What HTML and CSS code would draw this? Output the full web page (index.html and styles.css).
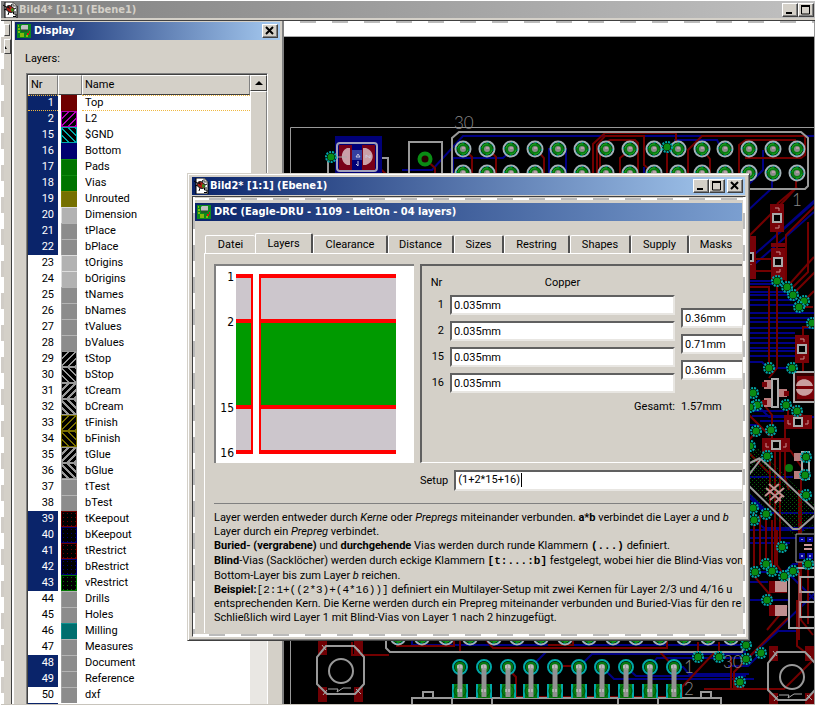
FILE: index.html
```html
<!DOCTYPE html>
<html lang="de">
<head>
<meta charset="utf-8">
<title>Bild4* [1:1] (Ebene1)</title>
<link rel="stylesheet" href="styles.css">
</head>
<body>
<svg class="defs" aria-hidden="true">
  <defs>
    <symbol id="doc-icon" viewBox="0 0 16 16">
      <path d="M2 0h8l4 4v12H2z" fill="#fff" stroke="#000" stroke-width="1"/>
      <path d="M10 0v4h4" fill="#d4d0c8" stroke="#555"/>
      <path d="M0 3l3 2M1 8l3-1M5 13l1-3M9 2L8 4M13 6l-2 1" stroke="#000"/>
      <ellipse cx="7" cy="7" rx="4" ry="3" transform="rotate(35 7 7)" fill="#b41a12" stroke="#222"/>
      <path d="M3 5l3-1 1 3z" fill="#111"/><path d="M8 6l3 1-1 3-2-1z" fill="#3a8a1d"/>
      <path d="M13 10h-2.500v2H13v2.500h-3" fill="none" stroke="#000"/>
    </symbol>
    <symbol id="board-icon" viewBox="0 0 14 14">
      <path d="M0 0h14v14H0z" fill="#0b8a1c"/>
      <path d="M5 1h6v5H4V2z" fill="#c0c0c0"/><path d="M4 6h7M5 7v1M7 7v1M9 7v1" stroke="#333"/>
      <path d="M1 2h1M1 5h2M1 8h2M3 10h4M3 12h4M9 12h2" stroke="#ffe600"/>
      <path d="M10 9h2v2h-2zM12 7h1v2h-1z" fill="#e01010"/>
    </symbol>
    <symbol id="min-icon" viewBox="0 0 12 10"><path d="M2 8h6" stroke="#000" stroke-width="2"/></symbol>
    <symbol id="max-icon" viewBox="0 0 12 10"><path d="M1.500 1v8h8V1M1 1.500h9" fill="none" stroke="#000"/><path d="M1 1h9" stroke="#000" stroke-width="2"/></symbol>
    <symbol id="close-icon" viewBox="0 0 12 10"><path d="M2 1l7 7M9 1L2 8" stroke="#000" stroke-width="2"/></symbol>
    <g id="pad">
      <circle r="7.500" fill="#000" stroke="#a3b1b7" stroke-width="2"/>
      <circle r="6.500" fill="none" stroke="#00a0a0" stroke-dasharray="2 3"/>
      <circle r="4.500" fill="#8c8c8c" stroke="#087a10" stroke-width="3"/>
      <path d="M-5-1a5 5 0 0 1 6-4M5 1a5 5 0 0 1-6 4" fill="none" stroke="#1ca824"/>
      <path d="M-1-2h3v2h-3z" fill="#b9a0a8"/>
    </g>
    <g id="via">
      <circle r="5" fill="#000" stroke="#00a8a8" stroke-width="2" stroke-dasharray="2 1"/>
      <circle r="3.500" fill="#0a8c14"/>
    </g>
    <g id="pinpair">
      <circle r="7" fill="#000" stroke="#00a8a8" stroke-width="2"/><circle r="5.500" fill="#087a10"/>
      <path d="M-6 17h12v14h-12z" fill="#087a10"/><path d="M-7 17v14M7 17v14" stroke="#00a8a8" stroke-width="2"/>
      <circle cy="24" r="6" fill="#087a10" stroke="#054f0a"/>
      <path d="M-2.500 0h5v30h-5z" fill="#929292"/><circle r="3" fill="#a0a0a0"/>
      <path d="M-2-2v3M1-2v3M-2 22v3M1 22v3" stroke="#d8d8d8"/>
    </g>
    <g id="chip">
      <path d="M-7-14H7V14H-7z" fill="#780208"/><path d="M-4-4h8v8h-8z" fill="#000" stroke="#a9a9a9" stroke-width="2"/>
      <path d="M-2-10h4v3M-2 10h4v-3" fill="none" stroke="#c98c8c"/>
    </g>
    <g id="switch">
      <path d="M-23-31h9v15h-9zM13-31h9v15h-9zM-23 16h9v15h-9zM13 16h9v15h-9z" fill="#700004"/>
      <path d="M-15-25h28l10 11v27l-9 10h-28l-10-10v-27z" fill="none" stroke="#999" stroke-width="2"/>
      <circle r="12" fill="none" stroke="#999" stroke-width="2"/>
      <path d="M-13 18h10l-1 3 6-4h8M-19-26l4 5M-18 24l4-5M14-24l5 4M15 18l5 5" fill="none" stroke="#aaa" stroke-width="1"/>
    </g>
    <pattern id="dots" width="4" height="4" patternUnits="userSpaceOnUse"><path d="M0 0h1v1H0zM2 2h1v1H2z" fill="#075a0a"/></pattern>
  </defs>
</svg>

<main class="app">
  <header class="titlebar titlebar-idle">
    <svg class="icon16"><use href="#doc-icon"/></svg>
    <h1 class="title">Bild4* [1:1] (Ebene1)</h1>
    <button class="cap" aria-label="Minimieren"><svg><use href="#min-icon"/></svg></button><button class="cap" aria-label="Maximieren"><svg><use href="#max-icon"/></svg></button>
  </header>

  <div class="workspace">
    <div class="strip"><span class="strip-box"></span><span class="strip-arrow"><i></i></span></div>

    <section class="display">
      <header class="titlebar titlebar-active">
        <svg class="icon14"><use href="#board-icon"/></svg>
        <h2 class="title">Display</h2>
        <button class="cap" aria-label="Schließen"><svg><use href="#close-icon"/></svg></button>
      </header>
      <p class="layers-label">Layers:</p>
      <div class="list">
        <table class="layers">
          <thead><tr><th class="nr">Nr</th><th class="sw" aria-label="Farbe"></th><th>Name</th></tr></thead>
          <tbody>
            <tr class="on focus"><td>1</td><td><i class="s red"></i></td><td>Top</td></tr>
            <tr class="on"><td>2</td><td><i class="s hatch-up magenta"></i></td><td>L2</td></tr>
            <tr class="on"><td>15</td><td><i class="s hatch-down cyan"></i></td><td>$GND</td></tr>
            <tr class="on"><td>16</td><td><i class="s blue"></i></td><td>Bottom</td></tr>
            <tr class="on"><td>17</td><td><i class="s green"></i></td><td>Pads</td></tr>
            <tr class="on"><td>18</td><td><i class="s green"></i></td><td>Vias</td></tr>
            <tr class="on"><td>19</td><td><i class="s olive"></i></td><td>Unrouted</td></tr>
            <tr class="on"><td>20</td><td><i class="s light"></i></td><td>Dimension</td></tr>
            <tr class="on"><td>21</td><td><i class="s"></i></td><td>tPlace</td></tr>
            <tr class="on"><td>22</td><td><i class="s"></i></td><td>bPlace</td></tr>
            <tr><td>23</td><td><i class="s light"></i></td><td>tOrigins</td></tr>
            <tr><td>24</td><td><i class="s light"></i></td><td>bOrigins</td></tr>
            <tr><td>25</td><td><i class="s"></i></td><td>tNames</td></tr>
            <tr><td>26</td><td><i class="s"></i></td><td>bNames</td></tr>
            <tr><td>27</td><td><i class="s"></i></td><td>tValues</td></tr>
            <tr><td>28</td><td><i class="s"></i></td><td>bValues</td></tr>
            <tr><td>29</td><td><i class="s hatch-up"></i></td><td>tStop</td></tr>
            <tr><td>30</td><td><i class="s hatch-down"></i></td><td>bStop</td></tr>
            <tr><td>31</td><td><i class="s hatch-up wide"></i></td><td>tCream</td></tr>
            <tr><td>32</td><td><i class="s hatch-down wide"></i></td><td>bCream</td></tr>
            <tr><td>33</td><td><i class="s hatch-up gold"></i></td><td>tFinish</td></tr>
            <tr><td>34</td><td><i class="s hatch-down gold"></i></td><td>bFinish</td></tr>
            <tr><td>35</td><td><i class="s hatch-up wide"></i></td><td>tGlue</td></tr>
            <tr><td>36</td><td><i class="s hatch-down wide"></i></td><td>bGlue</td></tr>
            <tr><td>37</td><td><i class="s"></i></td><td>tTest</td></tr>
            <tr><td>38</td><td><i class="s"></i></td><td>bTest</td></tr>
            <tr class="on"><td>39</td><td><i class="s dots dred"></i></td><td>tKeepout</td></tr>
            <tr class="on"><td>40</td><td><i class="s dots dblue"></i></td><td>bKeepout</td></tr>
            <tr class="on"><td>41</td><td><i class="s dots dred"></i></td><td>tRestrict</td></tr>
            <tr class="on"><td>42</td><td><i class="s dots dblue"></i></td><td>bRestrict</td></tr>
            <tr class="on"><td>43</td><td><i class="s dots dgreen"></i></td><td>vRestrict</td></tr>
            <tr><td>44</td><td><i class="s"></i></td><td>Drills</td></tr>
            <tr><td>45</td><td><i class="s"></i></td><td>Holes</td></tr>
            <tr><td>46</td><td><i class="s teal"></i></td><td>Milling</td></tr>
            <tr><td>47</td><td><i class="s"></i></td><td>Measures</td></tr>
            <tr class="on"><td>48</td><td><i class="s"></i></td><td>Document</td></tr>
            <tr class="on"><td>49</td><td><i class="s"></i></td><td>Reference</td></tr>
            <tr><td>50</td><td><i class="s"></i></td><td>dxf</td></tr>
            <tr class="on"><td></td><td></td><td></td></tr>
          </tbody>
        </table>
        <div class="scroll"><button class="up" aria-label="Nach oben"><i></i></button><div class="thumb"></div></div>
      </div>
    </section>

    <section class="board">
      <div class="toolbar"></div>
      <svg class="pcb" viewBox="284 37 530 667" preserveAspectRatio="xMinYMin slice" role="img" aria-label="Platine">
        <g fill="none" stroke="#000084" stroke-width="2">
          <path d="M402 170h30l31-34h354M453 173v-15h50l9-8M549 173v-24h18M566 149v24M674 140h43l4 8M644 173v-6M763 150v20l-20 20M772 180v8l-30 28"/>
          <path d="M748 260L817 200M748 270l66-58M760 250l55-50M748 281h24M748 284h30l9 5M748 292h40M748 295h44M748 300h48M748 305h50M748 313h67M748 318h67M748 322h67M748 328h67M748 333h47M748 338h47M748 343h47M748 348h47M748 351h47M748 356h47M748 362h14l6 6M770 368h22M748 411h36M752 416h32M760 421h40M757 405l12 12h46M748 425h10"/>
          <path d="M748 477h45M748 493l20 20h47M750 498l15 15M748 520h6l10 8h50M748 538h50M748 543h42M748 530h56M760 535v20M755 572h30l8-8h20M748 582h20M767 600h-19M767 600h22M815 600l-28-28M746 660l60-58 9-9M761 653l-13 13v0h-20M746 660l32-29h20"/>
          <path d="M412 640v5h330M440 645h25M531 667l15-15h200M579 667l13-13h150M650 667l7-9h85M602 667l12 12h140M674 667h9l6 7h60M626 667l10 9h110"/>
        </g>
        <g fill="none" stroke="#730000" stroke-width="2">
          <path d="M376 165l10 9M425 159l10 9v6M466 151l6 6v16M490 151l6 6v16M538 151l6 7v15M593 173v-29l12-11h71v10M597 173v-28l8-9h39v29l6 5M600 173v-27l10-6h25l3 3v30M630 150l-10 8v15M667 150v23M688 173v-23l14-14h103v19l-4 3h-56M702 149l8 10v14M739 173v-28l7-5h50M796 173v15l-10 11-38 38"/>
          <path d="M777 204l20-17M777 232v20M777 278v90l-8 10M748 259h37M748 271h24M748 287h21v80M787 287l27-30M786 285v-50l29-29M808 222v50l-15 15M793 294l22-22M804 301l10-10M799 307h14M803 335v-8h10M803 363v10M778 378v30M762 402l10 13v27M788 410v5M785 428v25M748 414l22 22M757 431l-9 10M793 406l15 15"/>
          <path d="M748 452l22 22M770 455v50M775 450v120M780 450v97M790 450l17 25M785 453v25l4 12M766 514v50M754 510v66l17 20M760 515v50M772 520v50M777 530v35l7 10M801 470v150l12 15M799 490v150M797 600v46l8 6M767 630l20-24M788 618l-54 54v15h10M704 689h80l30-30M808 564v60"/>
          <path d="M352 642v13h37M397 640v6h57v-6M460 640v12h214M486 640l7 8h174v-8M548 645h25v-5M698 657v-15M719 657v-15M731 657v32h14M715 652l-33 35v10H516v-20l-8-8M555 666h24M674 667l-14-15M674 667v30"/>
        </g>
        <g fill="none" stroke="#999" stroke-width="1">
          <path d="M290.500 705V127.500H817"/>
          <path d="M328 173v-15M388 173v-15h-10" stroke-width="2"/>
          <rect x="409" y="142" width="33" height="40" stroke-width="2"/>
          <path d="M459 132h342l7 6v48l-3 3H455l-3-3v-48z" stroke-width="2"/>
          <path d="M386 640v8l4 4h352l2-6v-6" stroke-width="2"/>
          <path d="M412 705v-7h309v7M452 698v7M492 698v7M618 698v7M658 698v7M423 698v-6h10v6M701 698v-6h10v6" stroke-width="2"/>
        </g>
        <path d="M335 136h47v38h-47z" fill="#000078"/>
        <rect x="337" y="143" width="40" height="28" rx="3" fill="none" stroke="#a0a0b8" stroke-width="2"/>
        <path d="M339 145h13v25h-13zM362 145h13v25h-13z" fill="#780018"/>
        <path d="M350 148v17h-3c-7-3-7-14 0-17zM363 148v17h3c9-3 9-14 0-17z" fill="#caa0a8"/><path d="M352 150h10v10h-10z" fill="#343fa0"/>
        <path d="M356 157l2-3 2 3zM358 161v5l-2-2M366 158v-3l4 3v-3" fill="none" stroke="#c8c8e0"/>
        <path d="M331 157h16" stroke="#a9a9a9"/><use href="#via" x="331" y="157"/>
        <circle cx="425" cy="159" r="5.500" fill="#260000" stroke="#0a8c14" stroke-width="4"/>
        <g>
          <use href="#pad" x="463" y="149"/><use href="#pad" x="487" y="149"/><use href="#pad" x="511" y="149"/><use href="#pad" x="535" y="149"/><use href="#pad" x="558" y="149"/><use href="#pad" x="582" y="149"/><use href="#pad" x="606" y="149"/><use href="#pad" x="630" y="149"/><use href="#pad" x="654" y="149"/><use href="#pad" x="678" y="149"/><use href="#pad" x="702" y="149"/><use href="#pad" x="725" y="149"/><use href="#pad" x="749" y="149"/><use href="#pad" x="773" y="149"/><use href="#pad" x="797" y="149"/>
          <use href="#pad" x="463" y="173"/><use href="#pad" x="487" y="173"/><use href="#pad" x="511" y="173"/><use href="#pad" x="535" y="173"/><use href="#pad" x="558" y="173"/><use href="#pad" x="582" y="173"/><use href="#pad" x="606" y="173"/><use href="#pad" x="630" y="173"/><use href="#pad" x="654" y="173"/><use href="#pad" x="678" y="173"/><use href="#pad" x="702" y="173"/><use href="#pad" x="725" y="173"/><use href="#pad" x="749" y="173"/><use href="#pad" x="773" y="173"/><use href="#pad" x="797" y="173"/>
          <use href="#pad" x="398" y="637"/><use href="#pad" x="422" y="637"/><use href="#pad" x="446" y="637"/><use href="#pad" x="470" y="637"/><use href="#pad" x="494" y="637"/><use href="#pad" x="517" y="637"/><use href="#pad" x="541" y="637"/><use href="#pad" x="565" y="637"/><use href="#pad" x="589" y="637"/><use href="#pad" x="613" y="637"/><use href="#pad" x="636" y="637"/><use href="#pad" x="660" y="637"/><use href="#pad" x="684" y="637"/><use href="#pad" x="708" y="637"/><use href="#pad" x="731" y="637"/>
        </g>
        <use href="#via" x="667" y="147"/>
        <use href="#pinpair" x="460" y="667"/><use href="#pinpair" x="484" y="667"/><use href="#pinpair" x="508" y="667"/><use href="#pinpair" x="531" y="667"/><use href="#pinpair" x="555" y="667"/><use href="#pinpair" x="579" y="667"/><use href="#pinpair" x="602" y="667"/><use href="#pinpair" x="626" y="667"/><use href="#pinpair" x="650" y="667"/><use href="#pinpair" x="674" y="667"/>
        <use href="#chip" x="777" y="218"/><use href="#chip" x="778" y="262"/><use href="#chip" x="749" y="257"/><use href="#chip" x="802" y="349"/>
        <path d="M771 245h14M771 278h14" stroke="#780208" stroke-width="4"/>
        <path d="M742 236h14v14h-14zM742 265h14v14h-14z" fill="#780208"/>
        <use href="#chip" transform="translate(798 422) rotate(90)"/><use href="#chip" transform="translate(776 445) rotate(90)"/>
        <path d="M764 380h8v9h-8zM764 398h8v9h-8zM779 389h8v8h-8z" fill="#b87c7c"/><path d="M762 382h5v5h-5zM762 400h5v5h-5zM784 391h5v5h-5z" fill="#780208"/><path d="M772 379h6v28h-6z" fill="#000" stroke="#aaa" stroke-width="2"/>
        <path d="M794 372h24v30h-24z" fill="#300" stroke="#aaa" stroke-width="2"/><path d="M797 376h17v23h-17z" fill="#780208"/><path d="M796 386c1-9 15-9 17 0zM796 389c1 9 15 9 17 0z" fill="#c9a0a0"/>
        <path d="M794 453h7v8h-7zM794 471h7v8h-7z" fill="#b87c7c"/><path d="M802 452h7v27h-7z" fill="none" stroke="#aaa" stroke-width="2"/>
        <path d="M748 456l10-6 60 62-18 18h-7l-45-46z" fill="url(#dots)"/>
        <path d="M748 476l13-17 54 51M748 485l45 44h6l16-14M750 463l10-5" fill="none" stroke="#999" stroke-width="2"/>
        <path d="M748 456l10-7 60 60M748 492l48 44 20-13" fill="none" stroke="#087a10" stroke-dasharray="1 2"/>
        <path d="M766 488l15 13M769 484l15 13M765 496l14-12M770 500l14-12M775 503l8-8" stroke="#c09090" stroke-width="2"/>
        <path d="M796 534h20v28h-20z" fill="#000" stroke="#aaa"/><path d="M800 538h4v3h-4zM808 538h4v3h-4zM800 554h4v4h-4zM808 554h4v4h-4z" fill="#8f8fd8" stroke="#0808a0" stroke-width="2"/><path d="M804 545h8M804 549h8" stroke="#c99" stroke-width="2"/>
        <path d="M769 581h18v12h-18zM769 605h18v11h-18z" fill="#780208"/><path d="M775 581h12v11h-12zM775 605h12v11h-12z" fill="#c09090"/>
        <path d="M789 568h28v60h-28zM800 577h18v15h-18zM800 602h18v15h-18z" fill="none" stroke="#aaa" stroke-width="2"/><path d="M799 572v56M801 590v12" stroke="#b66" stroke-width="1"/>
        <circle cx="789" cy="468" r="4" fill="#0a7a10"/>
        <use href="#switch" x="341" y="671"/><use href="#switch" x="792" y="677"/>
        <g>
          <use href="#via" x="777" y="281"/><use href="#via" x="787" y="287"/><use href="#via" x="793" y="295"/><use href="#via" x="804" y="301"/><use href="#via" x="799" y="307"/><use href="#via" x="812" y="323"/><use href="#via" x="769" y="368"/><use href="#via" x="792" y="368"/><use href="#via" x="753" y="393"/><use href="#via" x="757" y="405"/><use href="#via" x="750" y="407"/><use href="#via" x="786" y="405"/><use href="#via" x="797" y="411"/><use href="#via" x="756" y="431"/><use href="#via" x="771" y="430"/><use href="#via" x="750" y="446"/><use href="#via" x="767" y="456"/><use href="#via" x="806" y="457"/><use href="#via" x="805" y="475"/><use href="#via" x="806" y="495"/><use href="#via" x="753" y="508"/><use href="#via" x="754" y="520"/><use href="#via" x="766" y="514"/><use href="#via" x="782" y="547"/><use href="#via" x="766" y="564"/><use href="#via" x="772" y="571"/><use href="#via" x="755" y="572"/><use href="#via" x="784" y="576"/><use href="#via" x="793" y="571"/><use href="#via" x="808" y="564"/><use href="#via" x="767" y="600"/><use href="#via" x="746" y="645"/><use href="#via" x="761" y="653"/><use href="#via" x="746" y="659"/><use href="#via" x="740" y="682"/><use href="#via" x="698" y="657"/><use href="#via" x="719" y="657"/>
        </g>
        <g class="silk"><text x="454" y="129">30</text><text x="792" y="206">1</text><text x="684" y="673">1</text><text x="684" y="695">2</text><text x="723" y="668">30</text></g>
      </svg>
    </section>

    <section class="drc">
      <header class="titlebar titlebar-active">
        <svg class="icon16"><use href="#doc-icon"/></svg>
        <h2 class="title">Bild2* [1:1] (Ebene1)</h2>
        <button class="cap" aria-label="Minimieren"><svg><use href="#min-icon"/></svg></button><button class="cap" aria-label="Maximieren"><svg><use href="#max-icon"/></svg></button><button class="cap cap-close" aria-label="Schließen"><svg><use href="#close-icon"/></svg></button>
      </header>
      <div class="torn">
        <header class="titlebar titlebar-inner">
          <svg class="icon14"><use href="#board-icon"/></svg>
          <h3 class="title">DRC (Eagle-DRU - 1109 - LeitOn - 04 layers)</h3>
        </header>
        <div class="tabs" role="tablist">
          <button class="tab w50" role="tab">Datei</button><button class="tab w58 active" role="tab" aria-selected="true">Layers</button><button class="tab w74" role="tab">Clearance</button><button class="tab w66" role="tab">Distance</button><button class="tab w50" role="tab">Sizes</button><button class="tab w66" role="tab">Restring</button><button class="tab w61" role="tab">Shapes</button><button class="tab w58" role="tab">Supply</button><button class="tab last" role="tab">Masks</button>
        </div>
        <div class="page">
          <div class="columns">
            <svg class="stack" viewBox="0 0 197 197" role="img" aria-label="Lagenaufbau">
              <path d="M20 10h17v176H20zM45 10h135v176H45z" fill="#ccc6cc"/>
              <path d="M20 55h17v88H20zM45 55h135v88H45z" fill="#009a00"/>
              <path d="M20 8h17v180H20v-4h15v-41H20v-4h15V57H20v-4h15V12H20zM43 8h137v4H45v41h135v4H45v82h135v4H45v41h135v4H43z" fill="#f00"/>
              <g class="stack-nr"><text x="18" y="15">1</text><text x="18" y="60">2</text><text x="18" y="146">15</text><text x="18" y="191">16</text></g>
            </svg>
            <div class="copper">
              <div class="cu-left">
                <span class="hd">Nr</span><span class="hd cu-head">Copper</span>
                <label for="c1">1</label><input id="c1" value="0.035mm">
                <label for="c2">2</label><input id="c2" value="0.035mm">
                <label for="c15">15</label><input id="c15" value="0.035mm">
                <label for="c16">16</label><input id="c16" value="0.035mm">
                <span class="sum">Gesamt:</span>
              </div>
              <div class="cu-right">
                <input aria-label="Isolation 1-2" value="0.36mm"><input aria-label="Isolation 2-15" value="0.71mm"><input aria-label="Isolation 15-16" value="0.36mm">
                <output>1.57mm</output>
              </div>
            </div>
          </div>
          <div class="setup"><label for="setup">Setup</label><span class="setup-box"><input id="setup" value="(1+2*15+16)" size="11"></span></div>
          <div class="help">
            <p>Layer werden entweder durch <i>Kerne</i> oder <i>Prepregs</i> miteinander verbunden. <b>a*b</b> verbindet die Layer <i>a</i> und <i>b</i><br>Layer durch ein <i>Prepreg</i> verbindet.</p>
            <p><b>Buried- (vergrabene)</b> und <b>durchgehende</b> Vias werden durch runde Klammern <b><code>(...)</code></b> definiert.</p>
            <p class="loose"><b>Blind</b>-Vias (Sacklöcher) werden durch eckige Klammern <b><code>[t:...:b]</code></b> festgelegt, wobei hier die Blind-Vias vom<br>Bottom-Layer bis zum Layer <i>b</i> reichen.</p>
            <p><b>Beispiel:</b><code>[2:1+((2*3)+(4*16))]</code> definiert ein Multilayer-Setup mit zwei Kernen für Layer 2/3 und 4/16 u<br>entsprechenden Kern. Die Kerne werden durch ein Prepreg miteinander verbunden und Buried-Vias für den res<br>Schließlich wird Layer 1 mit Blind-Vias von Layer 1 nach 2 hinzugefügt.</p>
          </div>
        </div>
      </div>
    </section>
  </div>
</main>
</body>
</html>
```
FILE: styles.css
```css
* { box-sizing: border-box; }
body { margin: 0; background: #fff; color: #000; font: 11px/14px Roboto, "DejaVu Sans Condensed", sans-serif; overflow: hidden; }
h1, h2, h3, p { margin: 0; font-size: 11px; }
h1, h2, h3 { font-family: "DejaVu Sans Condensed", "DejaVu Sans", sans-serif; }
button, input { font: inherit; color: inherit; margin: 0; border-radius: 0; }
.defs { position: absolute; width: 0; height: 0; }

.app { height: 100vh; display: flex; flex-direction: column; padding: 1px 2px 4px 1px; background: #fff; }
.titlebar { display: flex; align-items: center; height: 18px; flex: none; padding: 0 2px; }
.titlebar-idle { height: 19px; background: linear-gradient(90deg, #808080, #c0c0c0); color: #d4d0c8; border-bottom: 2px solid #d4d0c8; padding: 0 1px 0 2px; }
.titlebar-active { background: linear-gradient(90deg, #0a246a, #a6caf0); color: #fff; }
.titlebar-inner { background: linear-gradient(90deg, #0a246a, #7b9fd0); color: #fff; margin-top: 3px; }
.title { flex: 1; font-weight: bold; white-space: nowrap; overflow: hidden; }
.icon16 { width: 16px; height: 16px; flex: none; }
.icon14 { width: 14px; height: 14px; flex: none; margin: 0 3px 0 0; }
.cap { width: 16px; height: 14px; flex: none; padding: 0; background: #d4d0c8; border: 1px solid; border-color: #fff #404040 #404040 #fff; box-shadow: inset -1px -1px #808080; display: flex; }
.cap svg { width: 12px; height: 10px; margin: 1px; }
.cap-close { margin-left: 2px; }

.workspace { flex: 1; min-height: 0; display: flex; position: relative; border-top: 1px solid #404040; border-bottom: 1px solid #c8c4bc; background: #d4d0c8; }
.strip { width: 13px; flex: none; padding: 3px 0 0 3px; border-right: 2px solid #fff; box-shadow: inset -1px 0 #404040; background: repeating-linear-gradient(#fff 0 16px, #d0ccc6 16px 32px) 0 0 / 3px 100% no-repeat #d4d0c8; display: flex; flex-direction: column; }
.strip-box { height: 12px; width: 6px; border: 1px solid; border-color: #fff #404040 #404040 #fff; }
.strip-arrow { height: 15px; margin-top: 3px; width: 7px; border: 1px solid; border-color: #fff #404040 #404040 #fff; display: flex; align-items: center; }
.strip-arrow i { border: 2px solid transparent; border-bottom: 3px solid #000; border-left: 0; }

.display { width: 270px; flex: none; display: flex; flex-direction: column; padding: 1px 2px 0 1px; border-right: 2px solid #808080; background: #d4d0c8; }
.layers-label { margin: 12px 0 7px 10px; }
.list { flex: 1; min-height: 0; margin: 0 12px 0 11px; display: flex; border: 1px solid; border-color: #808080 #fff #808080 #808080; border-bottom: 0; box-shadow: inset 1px 1px #404040; background: #fff; overflow: hidden; padding: 1px 0 0 1px; }
.layers { flex: 1; border-collapse: separate; border-spacing: 0; table-layout: fixed; width: 100%; align-self: flex-start; }
.layers th { height: 20px; padding: 0 0 0 2px; font-weight: normal; text-align: left; background: #d4d0c8; border: 1px solid; border-color: #fff #808080 #404040 #fff; }
.layers th.nr { width: 30px; }
.layers th.sw { width: 24px; }
.layers td { height: 16px; padding: 0 0 0 3px; line-height: 14px; }
.layers td:first-child { text-align: right; padding: 0 4px 0 0; }
.layers .on td:first-child { background: #0a246a; color: #fff; }
.layers .focus td { border: 1px dotted #f0b840; border-width: 1px 0; line-height: 12px; }
.layers .focus td:nth-child(2) { border-color: transparent; }
.focus .s { margin: -1px 0; }
.s { display: block; width: 16px; height: 16px; background: #8c8c8c; border-top: 1px solid #b4b4b4; border-left: 1px solid #a0a0a0; --c: #999; }
.red { background: #6e0000; border-color: #6e0000; }
.blue { background: #000070; border-color: #000070; }
.green { background: #007400; border-color: #108a10; }
.olive { background: #757000; border-color: #858000; }
.light { background: #b2b2b2; border-color: #ddd; }
.teal { background: #006e6e; border-color: #109090; }
.magenta { --c: #b000b0; }
.cyan { --c: #00a8a8; }
.gold { --c: #7a7000; }
.hatch-up { border: 1px solid var(--c); background: repeating-linear-gradient(135deg, #000 0 4px, var(--c) 4px 5px); }
.hatch-down { border: 1px solid var(--c); background: repeating-linear-gradient(45deg, #000 0 4px, var(--c) 4px 5px); }
.hatch-up.wide { background: repeating-linear-gradient(135deg, #000 0 3px, var(--c) 3px 5px); }
.hatch-down.wide { background: repeating-linear-gradient(45deg, #000 0 3px, var(--c) 3px 5px); }
.dots { border: 1px solid var(--c); background: conic-gradient(from 0deg at 1px 1px, transparent 270deg, var(--c) 0) 1px 1px / 4px 4px #000; }
.dred { --c: #700000; }
.dblue { --c: #000070; }
.dgreen { --c: #007800; }
.scroll { width: 17px; flex: none; display: flex; flex-direction: column; background: #e9e7e3; }
.up { height: 16px; padding: 0; background: #d4d0c8; border: 1px solid; border-color: #fff #404040 #404040 #fff; display: flex; align-items: center; justify-content: center; }
.up i { border: 4px solid transparent; border-top: 0; border-bottom-color: #000; }
.thumb { height: 75%; background: #d4d0c8; border: 1px solid; border-color: #fff #808080 #404040 #fff; }

.board { flex: 1; min-width: 0; display: flex; flex-direction: column; background: #000; border-right: 1px solid #999; }
.toolbar { height: 16px; flex: none; border-bottom: 1px solid #aaa; background: repeating-linear-gradient(90deg, #fff 0 16px, #bbb 16px 32px) 0 0 / 100% 2px no-repeat #fff; }
.pcb { flex: 1; min-height: 0; width: 100%; display: block; }
.silk { font: 300 17px Lato, sans-serif; fill: #8a8a8a; }

.drc { position: absolute; left: 186px; top: 152px; width: 563px; background: #d4d0c8; border: 1px solid; border-color: #d4d0c8 #404040 #404040 #d4d0c8; box-shadow: inset 1px 1px #fff, inset -1px -1px #808080; padding: 3px 4px; }
.torn { margin: 1px -1px 0 0; padding: 3px 3px 3px 2px; border: 1px solid #404040; border-right-color: #fff; border-bottom-color: #fff; overflow: hidden; background:
  repeating-linear-gradient(90deg, #fff 0 16px, #bbb 16px 32px) 0 1px / 100% 2px no-repeat,
  repeating-linear-gradient(90deg, #fff 0 16px, #bbb 16px 32px) 0 100% / 100% 2px no-repeat,
  repeating-linear-gradient(#fff 0 16px, #bbb 16px 32px) 0 0 / 2px 100% no-repeat,
  repeating-linear-gradient(#fff 0 16px, #bbb 16px 32px) 100% 0 / 2px 100% no-repeat, #d4d0c8; }
.tabs { display: flex; align-items: flex-end; height: 32px; margin-left: 10px; overflow: hidden; }
.tab { height: 18px; flex: none; padding: 0; background: #d4d0c8; border: 1px solid #fff; border-bottom: 0; border-right: 2px solid #505050; border-radius: 2px 2px 0 0; text-align: center; }
.tab:first-child { border-right: 0; }
.tab.active { height: 21px; margin-bottom: -1px; }
.tab.last { flex: 1; border-right: 0; }
.w50 { width: 50px; } .w58 { width: 58px; } .w61 { width: 61px; } .w66 { width: 66px; } .w74 { width: 75px; }
.page { margin-left: 9px; border-top: 1px solid #fff; border-left: 1px solid #fff; padding: 10px 0 8px 9px; }
.columns { display: flex; gap: 6px; }
.stack { width: 200px; height: 199px; flex: none; background: #fff; border-left: 2px solid #808080; border-top: 2px solid #808080; padding: 0 1px 0 0; }
.stack-nr { font: 12px "DejaVu Sans Condensed", sans-serif; text-anchor: end; }
.copper { flex: 1; min-width: 0; display: flex; gap: 6px; border: 2px solid #606060; border-right: 0; border-bottom: 1px solid #fff; padding-left: 7px; overflow: hidden; }
.cu-left { flex: 1; display: grid; grid-template-columns: 15px 1fr; grid-template-rows: 26px; grid-auto-rows: 26px; column-gap: 6px; align-content: start; }
.cu-left > * { align-self: center; }
.cu-left label { text-align: right; padding-bottom: 1px; }
.cu-left .hd { white-space: nowrap; justify-self: center; padding-top: 8px; }
.cu-left .sum { grid-column: 2; justify-self: end; padding-bottom: 4px; }
input { height: 20px; width: 100%; min-width: 0; padding: 0 2px; background: #fff; border: 2px solid; border-color: #606060 #e8e6e2 #e8e6e2 #606060; }
.cu-right { width: 61px; flex: none; padding-top: 42px; display: flex; flex-direction: column; gap: 6px; }
.cu-right input { border-right: 0; }
.cu-right output { padding-top: 14px; }
.setup { display: flex; align-items: center; margin: 7px 0 12px 206px; gap: 6px; }
.setup-box { flex: 1; display: flex; height: 21px; background: #fff; border: 2px solid #606060; border-right: 0; border-bottom-color: #e8e6e2; }
.setup input { border: 0; border-right: 1px solid #000; height: 14px; width: 66px; margin-top: 1px; padding: 0 0 0 2px; }
.help { border-top: 1px solid #808080; padding-top: 7px; white-space: nowrap; overflow: hidden; }
.help .loose { line-height: 15px; }
.help code { font-family: "Liberation Mono", monospace; font-size: 11px; line-height: 14px; }
```
